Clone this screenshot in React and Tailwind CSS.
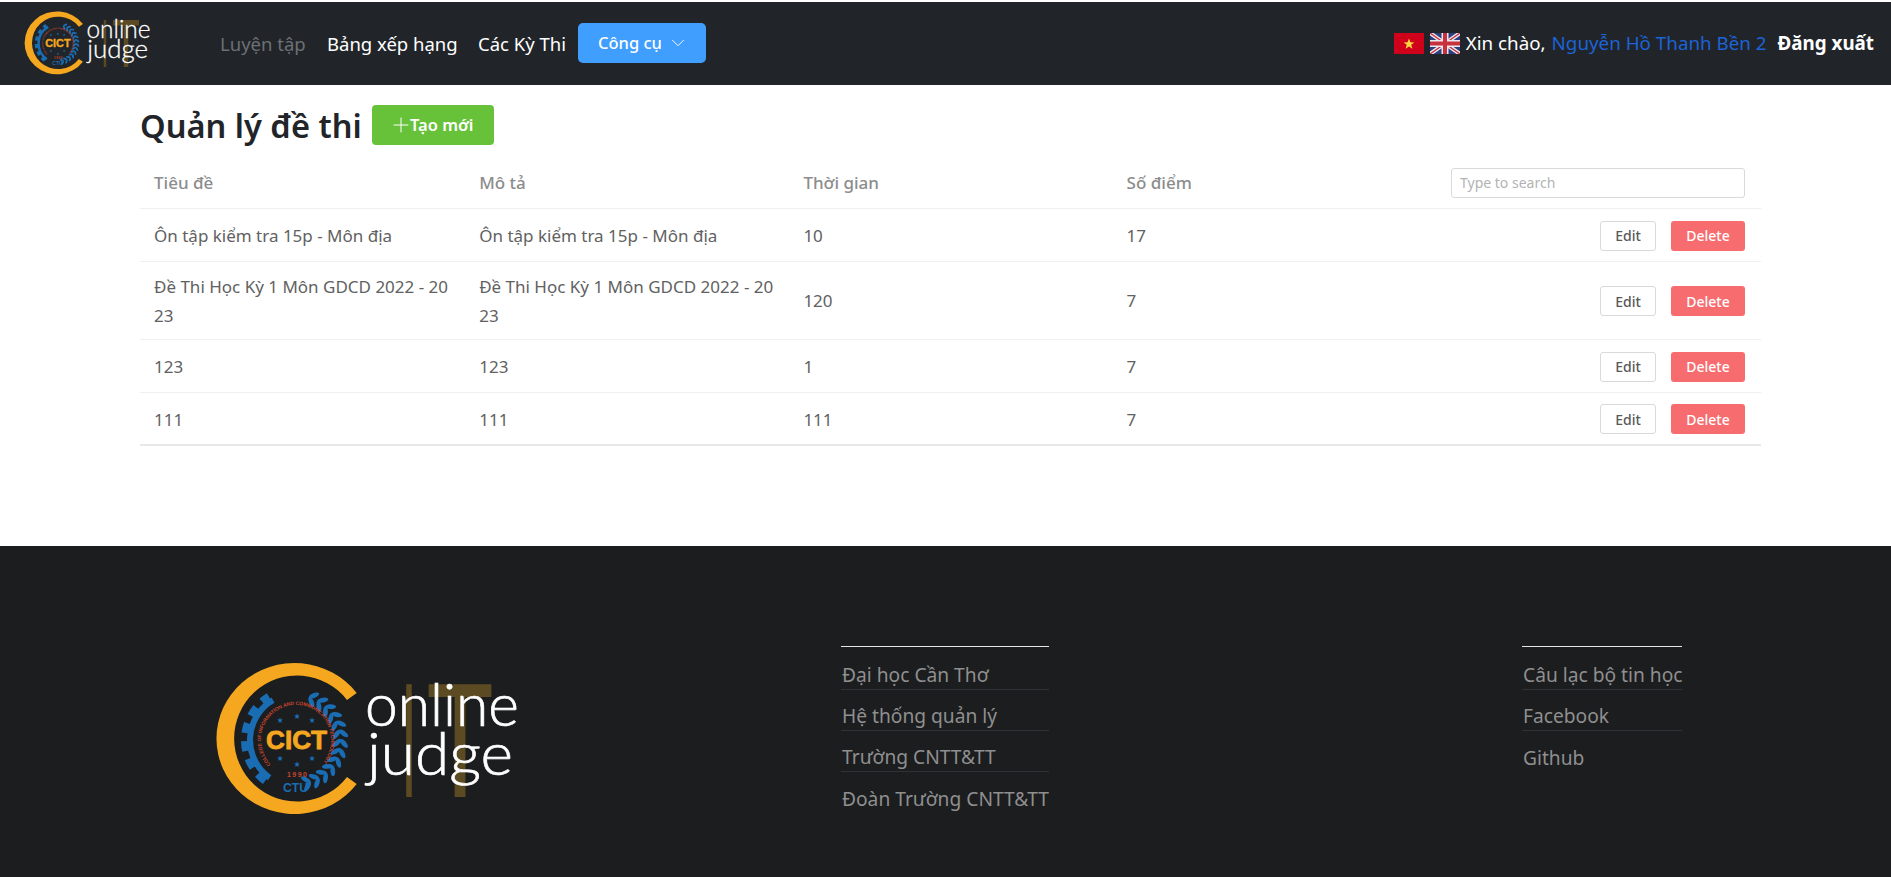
import { ChevronDown, Plus } from "lucide-react";

const rows = [
  { id: 1, title: "Ôn tập kiểm tra 15p - Môn địa", time: 10, score: 17, height: "h-[53px]" },
  { id: 2, title: "Đề Thi Học Kỳ 1 Môn GDCD 2022 - 2023", time: 120, score: 7, height: "h-[78px]" },
  { id: 3, title: "123", time: 1, score: 7, height: "h-[53px]" },
  { id: 4, title: "111", time: 111, score: 7, height: "h-[53px]" },
];

const linksLeft = ["Đại học Cần Thơ", "Hệ thống quản lý", "Trường CNTT&TT", "Đoàn Trường CNTT&TT"];
const linksRight = ["Câu lạc bộ tin học", "Facebook", "Github"];

const stars = [[65, 60], [82, 56], [97, 60], [65, 98], [82, 104], [97, 98]];

function polar(r, deg, cx = 81, cy = 80) {
  const a = (deg * Math.PI) / 180;
  return [cx + r * Math.cos(a), cy + r * Math.sin(a)];
}

function arc(r, from, to) {
  const [x1, y1] = polar(r, from);
  const [x2, y2] = polar(r, to);
  const large = Math.abs(to - from) > 180 ? 1 : 0;
  return `M${x1} ${y1}A${r} ${r} 0 ${large} 1 ${x2} ${y2}`;
}

function Logo({ id, className }) {
  const leaves = [];
  for (let deg = -68; deg <= 78; deg += 12) {
    const [ox, oy] = polar(48, deg);
    const [ix, iy] = polar(41, deg);
    leaves.push(
      <ellipse key={`o${deg}`} cx={ox} cy={oy} rx="5.5" ry="2.4" fill="#1a6db3" transform={`rotate(${deg + 45} ${ox} ${oy})`} />,
      <ellipse key={`i${deg}`} cx={ix} cy={iy} rx="5.5" ry="2.4" fill="#1a6db3" transform={`rotate(${deg + 135} ${ix} ${iy})`} />
    );
  }
  return (
    <svg viewBox="0 0 310 160" className={className}>
      <text x="186" y="137" fontFamily="Lato, sans-serif" fontSize="158" fill="#5c4a22" textLength="16" lengthAdjust="spacingAndGlyphs">I</text>
      <text x="212" y="137" fontFamily="Lato, sans-serif" fontSize="158" fill="#5c4a22" textLength="66" lengthAdjust="spacingAndGlyphs">T</text>
      <path d="M141.7 33A78 75.5 0 1 0 141.7 124L132 117A63 63 0 1 1 132 40Z" fill="#f4a71f" />
      {/* gear */}
      <path d={arc(46, 125, 240)} fill="none" stroke="#1a6db3" strokeWidth="6" />
      <path d={arc(51, 127, 238)} fill="none" stroke="#1a6db3" strokeWidth="8" strokeDasharray="10 8" />
      {/* laurel */}
      {leaves}
      <path id={`${id}-ring`} d={arc(35, 136, 403)} fill="none" />
      <text fontFamily="Liberation Sans, sans-serif" fontSize="5" fontWeight="700" fill="#c8452f">
        <textPath href={`#${id}-ring`} textLength="160">COLLEGE OF INFORMATION AND COMMUNICATION TECHNOLOGY</textPath>
      </text>
      {stars.map(([x, y]) => (
        <text key={`${x}-${y}`} x={x} y={y + 3} textAnchor="middle" fontSize="8" fill="#1a6db3" fontFamily="DejaVu Sans, sans-serif">★</text>
      ))}
      <text x="51" y="89" fontFamily="Liberation Sans, sans-serif" fontWeight="700" fontSize="25" fill="#f4a71f" stroke="#f4a71f" strokeWidth="0.8" textLength="61" lengthAdjust="spacingAndGlyphs">CICT</text>
      <text x="72" y="117" fontFamily="Liberation Sans, sans-serif" fontWeight="700" fontSize="7" fill="#c8452f" textLength="20">1990</text>
      <text x="68" y="132" fontFamily="Liberation Sans, sans-serif" fontWeight="700" fontSize="12" fill="#1a6db3" textLength="25" lengthAdjust="spacingAndGlyphs">CTU</text>
      <text x="150" y="66" fontFamily="Lato, sans-serif" fontWeight="300" fontSize="60" fill="#ffffff" stroke="#ffffff" strokeWidth="0.7" textLength="154" lengthAdjust="spacingAndGlyphs">online</text>
      <text x="152" y="115" fontFamily="Lato, sans-serif" fontWeight="300" fontSize="60" fill="#ffffff" stroke="#ffffff" strokeWidth="0.7" textLength="146" lengthAdjust="spacingAndGlyphs">judge</text>
    </svg>
  );
}

function FlagVN() {
  return (
    <svg viewBox="0 0 30 21" className="w-[30px] h-[21px]">
      <rect width="30" height="21" fill="#d0021b" />
      <polygon points="15,5.5 16.4,9.3 20.4,9.4 17.2,11.8 18.4,15.7 15,13.4 11.6,15.7 12.8,11.8 9.6,9.4 13.6,9.3" fill="#ffd83d" />
    </svg>
  );
}

function FlagUK() {
  return (
    <svg viewBox="0 0 30 21" className="w-[30px] h-[21px] ml-[6px]">
      <rect width="30" height="21" fill="#2b3f7e" />
      <path d="M0 0L30 21M30 0L0 21" stroke="#e9e9ee" strokeWidth="4" />
      <path d="M0 0L30 21M30 0L0 21" stroke="#c8313e" strokeWidth="1.4" />
      <path d="M15 0V21M0 10.5H30" stroke="#e9e9ee" strokeWidth="7" />
      <path d="M15 0V21M0 10.5H30" stroke="#c8313e" strokeWidth="4" />
    </svg>
  );
}

function Header() {
  return (
    <header className="mt-[2px] h-[83px] bg-[#212529] flex items-center pl-[24px] pr-[17px] text-white">
      <Logo id="nav-logo" className="w-[129px] h-[67px]" />
      <nav className="flex items-center ml-[67px] text-[18.5px]">
        <a className="text-[#6c7075] w-[107px]">Luyện tập</a>
        <a className="w-[151px]">Bảng xếp hạng</a>
        <a className="w-[100px]">Các Kỳ Thi</a>
        <button className="w-[128px] h-[40px] mb-[1px] bg-[#409eff] rounded-[5px] flex items-center pl-[20px] gap-[5px] text-[16.5px] font-medium">
          Công cụ
          <ChevronDown className="w-[22px] h-[22px]" strokeWidth={1} />
        </button>
      </nav>
      <div className="ml-auto flex items-center text-[18.8px]">
        <FlagVN />
        <FlagUK />
        <span className="ml-[6px]">Xin chào,</span>
        <a className="ml-[6px] text-[#1c63d8]">Nguyễn Hồ Thanh Bền 2</a>
        <a className="ml-[11px] font-bold">Đăng xuất</a>
      </div>
    </header>
  );
}

function ExamTable() {
  return (
    <table className="table-fixed w-full mt-[13px] text-[17px] text-[#616161]">
      <thead>
        <tr className="h-[50px] border-b border-[#f0f0f0] text-[#8c8c8c] text-left">
          <th className="px-[14px] font-medium">Tiêu đề</th>
          <th className="pl-[15px] pr-[14px] font-medium">Mô tả</th>
          <th className="pl-[15px] pr-[14px] font-medium">Thời gian</th>
          <th className="px-[14px] font-medium">Số điểm</th>
          <th className="pr-[16px]">
            <input
              placeholder="Type to search"
              className="block ml-auto w-[294px] h-[30px] px-[8px] rounded-[3px] border border-[#d9d9d9] text-[14px] font-normal placeholder:text-[#b3b3b3]"
            />
          </th>
        </tr>
      </thead>
      <tbody>
        {rows.map((r, i) => (
          <tr key={r.id} className={`${r.height} ${i === rows.length - 1 ? "border-b-2 border-[#e8e8e8]" : "border-b border-[#f0f0f0]"}`}>
            <td className="px-[14px] pt-[2px] leading-[29px] break-all">{r.title}</td>
            <td className="pl-[15px] pr-[13px] pt-[2px] leading-[29px] break-all">{r.title}</td>
            <td className="pl-[15px] pr-[14px] pt-[2px]">{r.time}</td>
            <td className="px-[14px] pt-[2px]">{r.score}</td>
            <td className="pr-[16px] pt-[2px]">
              <div className="flex justify-end gap-[15px] text-[14px] font-medium text-[#595959]">
                <button className="w-[56px] h-[30px] rounded-[3px] border border-[#d9d9d9] bg-white">Edit</button>
                <button className="w-[74px] h-[30px] rounded-[3px] bg-[#f76c6f] text-white">Delete</button>
              </div>
            </td>
          </tr>
        ))}
      </tbody>
    </table>
  );
}

function FooterLinks({ links, width, className }) {
  return (
    <div className={`${width} ${className} border-t border-[#e6e6e6] mt-[100px] self-start`}>
      {links.map((l, i) => (
        <div
          key={l}
          className={`flex items-end pl-[1px] leading-[28px] whitespace-nowrap ${i === links.length - 1 ? "" : "border-b border-[#303236]"} ${i === 0 ? "h-[43px]" : "h-[41px]"}`}
        >
          {l}
        </div>
      ))}
    </div>
  );
}

export default function App() {
  return (
    <div className="font-['Noto_Sans',sans-serif]">
      <Header />
      <main className="h-[461px] pl-[140px] pt-[20px] pr-[130px]">
        <div className="flex items-center gap-[10px] h-[40px]">
          <h1 className="text-[32.6px] font-semibold text-[#212529] pt-[3px]">Quản lý đề thi</h1>
          <button className="w-[122px] h-[40px] rounded-[4px] bg-[#67c23a] text-white text-[16.5px] font-semibold flex items-center justify-center">
            <Plus className="w-[24px] h-[24px] -mx-[3px]" strokeWidth={1} />
            Tạo mới
          </button>
        </div>
        <ExamTable />
      </main>
      <footer className="h-[331px] bg-[#1c1d1f] flex text-[19.2px] text-[#8f8f8f]">
        <Logo id="footer-logo" className="w-[310px] h-[160px] ml-[215px] mt-[114px]" />
        <FooterLinks links={linksLeft} width="w-[208px]" className="ml-[316px]" />
        <FooterLinks links={linksRight} width="w-[160px]" className="ml-[473px]" />
      </footer>
    </div>
  );
}
